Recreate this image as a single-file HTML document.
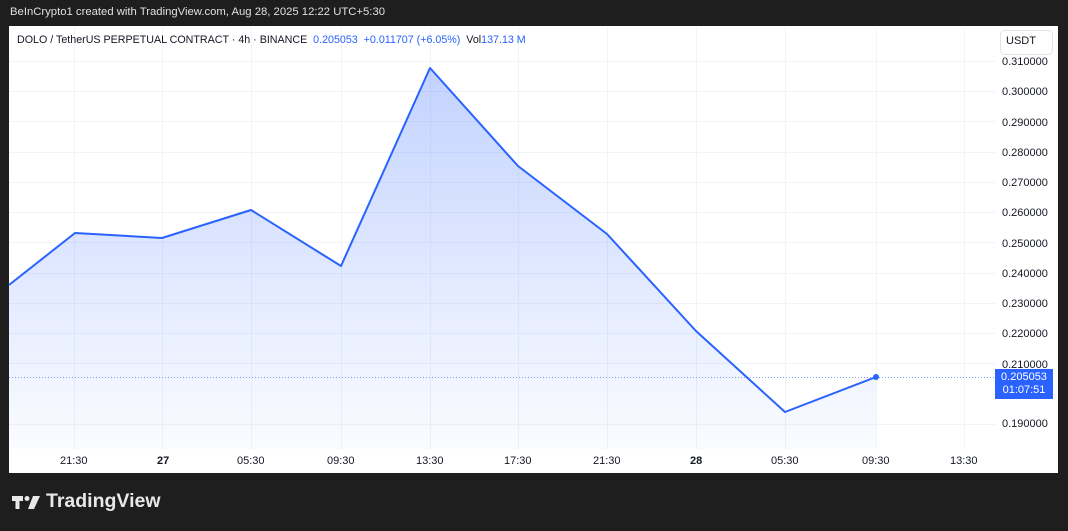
<!DOCTYPE html>
<html><head><style>
body{margin:0;width:1068px;height:531px;background:#1e1e1e;font-family:"Liberation Sans",sans-serif;overflow:hidden;position:relative}
.t{position:absolute;white-space:nowrap}
</style></head><body>
<div class="t" style="left:10px;top:6px;font-size:11.3px;color:#e0e0e0">BeInCrypto1 created with TradingView.com, Aug 28, 2025 12:22 UTC+5:30</div>
<div style="position:absolute;left:9px;top:26px;width:1049px;height:447px;background:#fff"></div>
<svg style="position:absolute;left:0;top:0" width="1068" height="531">
<defs><linearGradient id="g" x1="0" y1="0" x2="0" y2="1"><stop offset="0" stop-color="#2962ff" stop-opacity="0.28"/><stop offset="1" stop-color="#2962ff" stop-opacity="0.02"/></linearGradient></defs>
<g stroke="#f0f3fa" stroke-width="1">
<line x1="9" x2="995" y1="61.5" y2="61.5"/><line x1="9" x2="995" y1="91.5" y2="91.5"/><line x1="9" x2="995" y1="121.5" y2="121.5"/><line x1="9" x2="995" y1="152.5" y2="152.5"/><line x1="9" x2="995" y1="182.5" y2="182.5"/><line x1="9" x2="995" y1="212.5" y2="212.5"/><line x1="9" x2="995" y1="242.5" y2="242.5"/><line x1="9" x2="995" y1="273.5" y2="273.5"/><line x1="9" x2="995" y1="303.5" y2="303.5"/><line x1="9" x2="995" y1="333.5" y2="333.5"/><line x1="9" x2="995" y1="363.5" y2="363.5"/><line x1="9" x2="995" y1="424.5" y2="424.5"/>
<line x1="74.5" x2="74.5" y1="27" y2="449"/><line x1="162.5" x2="162.5" y1="27" y2="449"/><line x1="251.5" x2="251.5" y1="27" y2="449"/><line x1="341.5" x2="341.5" y1="27" y2="449"/><line x1="430.5" x2="430.5" y1="27" y2="449"/><line x1="518.5" x2="518.5" y1="27" y2="449"/><line x1="607.5" x2="607.5" y1="27" y2="449"/><line x1="696.5" x2="696.5" y1="27" y2="449"/><line x1="785.5" x2="785.5" y1="27" y2="449"/><line x1="876.5" x2="876.5" y1="27" y2="449"/><line x1="964.5" x2="964.5" y1="27" y2="449"/>
</g>
<path d="M9,285 L75,233 162,238 251,210 341,266 430,68 518,166 607,234 696,331 785,412 876,377 L876,449 L9,449Z" fill="url(#g)"/>
<line x1="9" x2="995" y1="377.5" y2="377.5" stroke="#7f9cff" stroke-dasharray="1 2" stroke-width="1"/>
<path d="M9,285 L75,233 162,238 251,210 341,266 430,68 518,166 607,234 696,331 785,412 876,377" fill="none" stroke="#2962ff" stroke-width="2" stroke-linejoin="round"/>
<circle cx="876" cy="377" r="3" fill="#2962ff"/>
<rect x="1000.5" y="30.5" width="52" height="24" rx="4" fill="#fff" stroke="#e0e3eb"/>
<g fill="#e8e8e8"><path d="M12 496h11v5h-3.5v8h-4v-8h-3.5z"/><circle cx="27" cy="498.5" r="2.5"/><path d="M33 496h7l-6 13h-6z"/></g>
</svg>
<div class="t" style="left:17px;top:34px;font-size:10.7px;color:#131722">DOLO / TetherUS PERPETUAL CONTRACT · 4h · BINANCE <span style="color:#2962ff">&nbsp;0.205053 &nbsp;+0.011707 (+6.05%)</span> &nbsp;Vol<span style="color:#2962ff">137.13 M</span></div>
<div class="t" style="left:1006px;top:35px;font-size:11px;color:#131722">USDT</div>
<div style="position:absolute;left:1002px;top:47px;font-size:11px;color:#131722;line-height:30.25px">0.310000<br>0.300000<br>0.290000<br>0.280000<br>0.270000<br>0.260000<br>0.250000<br>0.240000<br>0.230000<br>0.220000<br>0.210000</div>
<div class="t" style="left:1002px;top:418px;font-size:11px;color:#131722">0.190000</div>
<div style="position:absolute;left:995px;top:369px;width:58px;height:30px;background:#2962ff;color:#fff;font-size:11px;line-height:13px;text-align:center;padding-top:2px;box-sizing:border-box">0.205053<br>01:07:51</div>
<div style="position:absolute;top:455px;left:0;font-size:11px;color:#131722">
<span class="t" style="left:60px">21:30</span><span class="t" style="left:157px;font-weight:bold">27</span><span class="t" style="left:237px">05:30</span><span class="t" style="left:327px">09:30</span><span class="t" style="left:416px">13:30</span><span class="t" style="left:504px">17:30</span><span class="t" style="left:593px">21:30</span><span class="t" style="left:690px;font-weight:bold">28</span><span class="t" style="left:771px">05:30</span><span class="t" style="left:862px">09:30</span><span class="t" style="left:950px">13:30</span></div>
<div class="t" style="left:46px;top:490px;font-size:19.5px;font-weight:bold;color:#e8e8e8">TradingView</div>
</body></html>
